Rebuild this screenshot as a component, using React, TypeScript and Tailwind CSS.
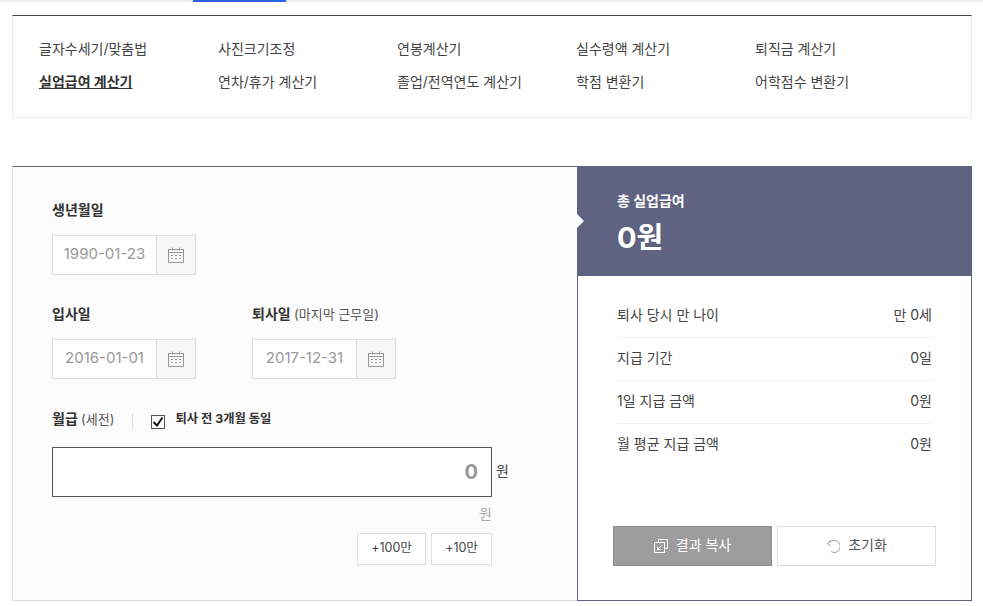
import type { ReactNode } from 'react';

const links = [
  ['글자수세기/맞춤법', '사진크기조정', '연봉계산기', '실수령액 계산기', '퇴직금 계산기'],
  ['실업급여 계산기', '연차/휴가 계산기', '졸업/전역연도 계산기', '학점 변환기', '어학점수 변환기'],
];

const results = [
  ['퇴사 당시 만 나이', '만 0세'],
  ['지급 기간', '0일'],
  ['1일 지급 금액', '0원'],
  ['월 평균 지급 금액', '0원'],
];

function CalendarIcon() {
  return (
    <svg width="16" height="16" viewBox="0 0 16 16" fill="none" stroke="#999" strokeWidth="1">
      <rect x="0.5" y="2.5" width="15" height="13" />
      <path d="M0.5 5.5H15.5M4.5 0.5V3.5M11.5 0.5V3.5" />
      <path d="M3 8.5H5M7 8.5H9M11 8.5H13M3 11.5H5M7 11.5H9M11 11.5H13" />
    </svg>
  );
}

function DateField({ value, className }: { value: string; className?: string }) {
  return (
    <div className={`flex h-10 w-36 border border-[#dcdcdc] bg-white ${className ?? ''}`}>
      <div className="flex-1 text-center text-[15px] leading-[36px] text-[#999]">{value}</div>
      <div className="flex w-[39px] items-center justify-center border-l border-[#dcdcdc] bg-[#f7f7f7]">
        <CalendarIcon />
      </div>
    </div>
  );
}

function Label({ children }: { children: ReactNode }) {
  return <div className="h-5 pt-px text-sm leading-5 font-bold text-[#333]">{children}</div>;
}

export default function App() {
  return (
    <div className="min-h-[606px] bg-white font-['Inter','Noto_Sans_CJK_KR',sans-serif] text-[#444]">
      <div className="h-0.5 bg-[#eee]">
        <div className="ml-[193px] h-0.5 w-[93px] bg-[#2d64e6]" />
      </div>

      <div className="mt-[13px] ml-3 flex h-[103px] w-[960px] flex-col gap-[11px] border border-[#eaeaea] border-t-[#444] pt-[22px] pl-[26px]">
        {links.map((row, i) => (
          <div key={i} className="flex">
            {row.map((t) => (
              <a
                key={t}
                className={`w-[179px] text-sm leading-[22px] ${t === '실업급여 계산기' ? 'font-bold text-[#333] underline' : ''}`}
              >
                {t}
              </a>
            ))}
          </div>
        ))}
      </div>

      <div className="mt-12 ml-3 flex h-[435px] w-[960px]">
        <div className="w-[565px] border border-r-0 border-[#ddd] border-t-[#666] bg-[#fcfcfc] pt-[32px] pl-[39px]">
          <Label>생년월일</Label>
          <DateField value="1990-01-23" className="mt-4" />

          <div className="mt-[28px] flex gap-14">
            <div>
              <Label>입사일</Label>
              <DateField value="2016-01-01" className="mt-4" />
            </div>
            <div>
              <Label>
                퇴사일 <span className="text-[13px] font-normal text-[#555]">(마지막 근무일)</span>
              </Label>
              <DateField value="2017-12-31" className="mt-4" />
            </div>
          </div>

          <div className="mt-[29px] flex h-5 items-center">
            <span className="pt-px text-sm font-bold text-[#333]">
              월급 <span className="text-[13px] font-normal text-[#555]">(세전)</span>
            </span>
            <span className="mt-[7px] ml-[18px] h-[15px] w-px bg-[#ddd]" />
            <span className="mt-[7px] ml-[18px] flex h-[14px] w-[14px] items-center justify-center border border-[#555] bg-white">
              <svg width="12" height="12" viewBox="0 0 12 12" fill="none" stroke="#111" strokeWidth="2">
                <path d="M1.5 6L5 9.5L10.5 1.5" />
              </svg>
            </span>
            <span className="ml-[10px] pt-[3px] text-[12.3px] font-bold text-[#333]">퇴사 전 3개월 동일</span>
          </div>

          <div className="mt-[19px] flex items-center">
            <div className="h-[50px] w-110 border border-[#555] bg-white pr-[13px] text-right text-xl leading-[48px] font-bold text-[#999]">
              0
            </div>
            <span className="ml-1 pb-[2px] text-sm text-[#444]">원</span>
          </div>
          <div className="mt-[7px] w-110 text-right text-sm leading-5 text-[#aaa]">원</div>
          <div className="mt-[9px] flex w-110 justify-end gap-[5px]">
            <button className="h-8 w-[69px] border border-[#ddd] bg-white pb-px text-[12.5px] text-[#444]">+100만</button>
            <button className="h-8 w-[61px] border border-[#ddd] bg-white pb-px text-[12.5px] text-[#444]">+10만</button>
          </div>
        </div>

        <div className="flex w-[395px] flex-col border border-[#5f6280]">
          <div className="relative -mx-px -mt-px h-[110px] bg-[#5f6280] pt-[25px] pl-10 text-white">
            <span className="absolute top-[47px] -left-px h-[16px] w-2 bg-white [clip-path:polygon(0_0,100%_50%,0_100%)]" />
            <div className="text-sm leading-5 font-bold">총 실업급여</div>
            <div className="mt-[7px] text-[29px] leading-10 font-bold">0원</div>
          </div>
          <div className="px-[39px] pt-[19px]">
            {results.map(([k, v], i) => (
              <div
                key={k}
                className={`flex h-[43px] items-center justify-between border-b pb-[2px] text-sm ${i < 3 ? 'border-[#f0f0f0]' : 'border-transparent'}`}
              >
                <span>{k}</span>
                <span>{v}</span>
              </div>
            ))}
          </div>
          <div className="mt-[59px] ml-[35px] flex gap-[5px]">
            <button className="flex h-10 w-[159px] items-center justify-center gap-2 border border-[#8f8f8f] bg-[#9d9d9d] text-sm text-white">
              <svg width="14" height="14" viewBox="0 0 14 14" fill="none" stroke="#fff" strokeWidth="1">
                <path d="M4.5 3.5V0.5H13.5V9.5H10.5" />
                <rect x="0.5" y="3.5" width="10" height="10" />
                <path d="M7.5 6.5L3.5 10.5M3.5 7.5V10.5H6.5" />
              </svg>
              <span className="pb-[2px]">결과 복사</span>
            </button>
            <button className="flex h-10 w-[159px] items-center justify-center gap-2 border border-[#ddd] bg-white text-sm text-[#555]">
              <svg width="14" height="14" viewBox="0 0 14 14" fill="none" stroke="#999" strokeWidth="1">
                <path d="M1.5 4.5C3 2.5 5.5 1.5 8 1.5A6 6 0 1 1 5 12.5" />
                <path d="M4.5 2L1.5 4.5L4.5 7" />
              </svg>
              <span className="pb-[2px]">초기화</span>
            </button>
          </div>
        </div>
      </div>
    </div>
  );
}
